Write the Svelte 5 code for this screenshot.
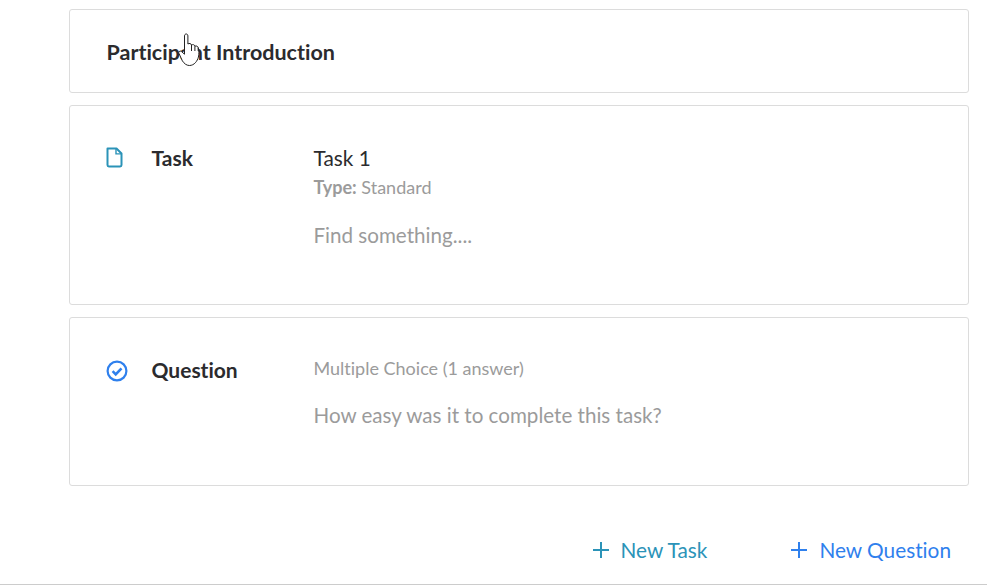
<script lang="ts">
  let tasks = [{ title: 'Task 1', type: 'Standard', body: 'Find something....' }];
</script>

<div class="page">
  <div class="list">
    <section class="card intro">
      <h2>Participant Introduction</h2>
    </section>

    {#each tasks as t}
      <section class="card row task">
        <div class="icon file">
          <svg width="17" height="21" viewBox="0 0 17 21" fill="none" stroke="#2b93b8" stroke-width="2">
            <path d="M1.500 1.500v16.600q0 1.400 1.400 1.400h11.200q1.400 0 1.400-1.400V6.500l-5-5z" stroke-linejoin="round" />
            <path d="M10 1.500v5.400h5.500" stroke-width="1.400" />
          </svg>
        </div>
        <div class="kind">Task</div>
        <div class="detail">
          <div class="title">{t.title}</div>
          <div class="meta"><b>Type:</b> {t.type}</div>
          <p>{t.body}</p>
        </div>
      </section>
    {/each}

    <section class="card row question">
      <div class="icon check">
        <svg width="22" height="22" viewBox="0 0 22 22" fill="none" stroke="#2f80ed" stroke-width="2.200">
          <circle cx="11" cy="11" r="9.400" />
          <path d="M6.600 11.200l3.100 3.100 5.800-6" stroke-width="2.600" />
        </svg>
      </div>
      <div class="kind">Question</div>
      <div class="detail">
        <div class="sub">Multiple Choice (1 answer)</div>
        <p>How easy was it to complete this task?</p>
      </div>
    </section>
  </div>

  <div class="actions">
    <button class="add teal">
      <svg width="16" height="16" viewBox="0 0 16 16" stroke="currentColor" stroke-width="2"><path d="M8 0v16M0 8h16" /></svg>
      New Task
    </button>
    <button class="add blue">
      <svg width="16" height="16" viewBox="0 0 16 16" stroke="currentColor" stroke-width="2"><path d="M8 0v16M0 8h16" /></svg>
      New Question
    </button>
  </div>

  <svg class="cursor" width="25" height="34" viewBox="0 0 25 34" fill="#fff" stroke="#222" stroke-width="1" stroke-linejoin="round">
    <path d="M6.500 3c0-2.700 3.400-2.700 3.400 0v8c1.400-1 3.200-.6 3.600 1 1.300-.8 3-.4 3.400 1.200 1.300-.6 2.900-.1 3.300 1.400.8 3 1 6.500.2 9.500-1 3.700-4 8.400-9 8.400-3 0-5.200-2-7-4.600L1 20.500c-1-1.500.9-3.200 2.400-2l3.100 2.700z" />
    <path d="M13.500 12v6M16.900 13.200V18M20.200 14.600V18" fill="none" />
  </svg>
</div>

<style>
  :global(body) {
    margin: 0;
    background: #fff;
  }
  .page {
    position: relative;
    height: 585px;
    box-sizing: border-box;
    padding: 9px 18px 0 69px;
    border-bottom: 1px solid #ccc;
    overflow: hidden;
    font-family: Lato, sans-serif;
    font-variant-ligatures: none;
    color: #2b2b2e;
  }
  .list {
    display: flex;
    flex-direction: column;
    gap: 12px;
  }
  .card {
    box-sizing: border-box;
    border: 1px solid #dcdcdc;
    border-radius: 3px;
    background: #fff;
  }
  .intro {
    height: 84px;
    padding: 29px 36.500px 0;
  }
  h2 {
    margin: 0;
    font-size: 21.500px;
    line-height: 26px;
    font-weight: 700;
  }
  .row {
    display: flex;
    padding-left: 36px;
  }
  .task {
    height: 200px;
    padding-top: 39px;
  }
  .question {
    height: 169px;
    padding-top: 39px;
  }
  .icon {
    width: 45.500px;
    flex: none;
  }
  .file {
    padding-top: 2px;
  }
  .check {
    padding-top: 3px;
  }
  .kind {
    width: 162px;
    flex: none;
    font-size: 21px;
    line-height: 26px;
    font-weight: 700;
  }
  .title {
    font-size: 20.800px;
    line-height: 26px;
  }
  .meta, .sub {
    font-size: 18px;
    line-height: 22px;
    color: #9b9b9b;
  }
  .meta {
    margin-top: 5px;
  }
  .detail p {
    margin: 0;
    font-size: 20.600px;
    line-height: 26px;
    color: #9b9b9b;
  }
  .meta + p {
    margin-top: 24px;
  }
  .sub + p {
    margin-top: 23px;
  }
  .actions {
    display: flex;
    justify-content: flex-end;
    gap: 84px;
    padding: 51px 18px 0 0;
  }
  .add {
    display: flex;
    align-items: center;
    gap: 12px;
    padding: 0;
    border: 0;
    background: none;
    font: 400 20.800px/26px Lato, sans-serif;
    font-variant-ligatures: none;
  }
  .teal { color: #2b93b8; }
  .blue { color: #2f80ed; }
  .cursor {
    position: absolute;
    left: 178px;
    top: 33px;
  }
</style>
